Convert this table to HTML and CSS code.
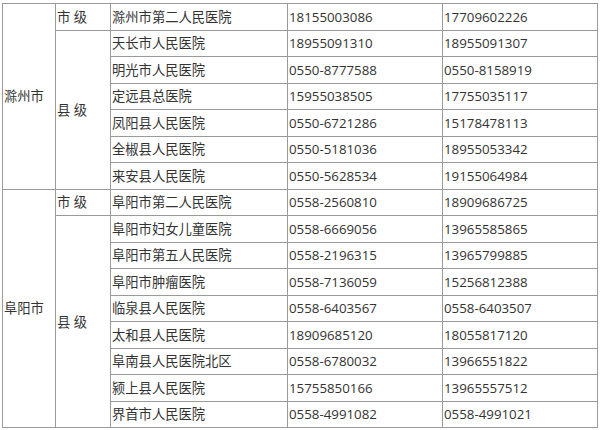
FILE: index.html
```html
<!DOCTYPE html>
<html lang="zh-CN">
<head>
<meta charset="utf-8">
<title>医院联系电话</title>
<link rel="stylesheet" href="styles.css">
</head>
<body>
<table class="tbl">
  <colgroup>
    <col class="c-city">
    <col class="c-level">
    <col class="c-name">
    <col class="c-tel">
    <col class="c-tel2">
  </colgroup>
  <tbody>
    <tr><td rowspan="7">滁州市</td><td>市 级</td><td>滁州市第二人民医院</td><td>18155003086</td><td>17709602226</td></tr>
    <tr><td rowspan="6">县 级</td><td>天长市人民医院</td><td>18955091310</td><td>18955091307</td></tr>
    <tr><td>明光市人民医院</td><td>0550-8777588</td><td>0550-8158919</td></tr>
    <tr><td>定远县总医院</td><td>15955038505</td><td>17755035117</td></tr>
    <tr><td>凤阳县人民医院</td><td>0550-6721286</td><td>15178478113</td></tr>
    <tr><td>全椒县人民医院</td><td>0550-5181036</td><td>18955053342</td></tr>
    <tr><td>来安县人民医院</td><td>0550-5628534</td><td>19155064984</td></tr>
    <tr><td rowspan="9">阜阳市</td><td>市 级</td><td>阜阳市第二人民医院</td><td>0558-2560810</td><td>18909686725</td></tr>
    <tr><td rowspan="8">县 级</td><td>阜阳市妇女儿童医院</td><td>0558-6669056</td><td>13965585865</td></tr>
    <tr><td>阜阳市第五人民医院</td><td>0558-2196315</td><td>13965799885</td></tr>
    <tr><td>阜阳市肿瘤医院</td><td>0558-7136059</td><td>15256812388</td></tr>
    <tr><td>临泉县人民医院</td><td>0558-6403567</td><td>0558-6403507</td></tr>
    <tr><td>太和县人民医院</td><td>18909685120</td><td>18055817120</td></tr>
    <tr><td>阜南县人民医院北区</td><td>0558-6780032</td><td>13966551822</td></tr>
    <tr><td>颍上县人民医院</td><td>15755850166</td><td>13965557512</td></tr>
    <tr><td>界首市人民医院</td><td>0558-4991082</td><td>0558-4991021</td></tr>
  </tbody>
</table>
</body>
</html>
```

FILE: styles.css
```css
html, body {
  margin: 0;
  padding: 0;
  background: #ffffff;
}

body {
  padding: 3px 0 0 2px;
  font-family: "Open Sans", "Noto Sans CJK SC", sans-serif;
  font-size: 13.3px;
  color: #333333;
}

.tbl {
  border-collapse: collapse;
  table-layout: fixed;
  width: 595px;
}

.c-city { width: 53px; }
.c-level { width: 55px; }
.c-name { width: 177px; }
.c-tel { width: 155px; }
.c-tel2 { width: 155px; }

.tbl tr {
  height: 26.5px;
}

.tbl td {
  border: 1px solid #9a9a9a;
  padding: 0 1px;
  line-height: 18px;
  vertical-align: middle;
  white-space: nowrap;
  overflow: hidden;
}
```
